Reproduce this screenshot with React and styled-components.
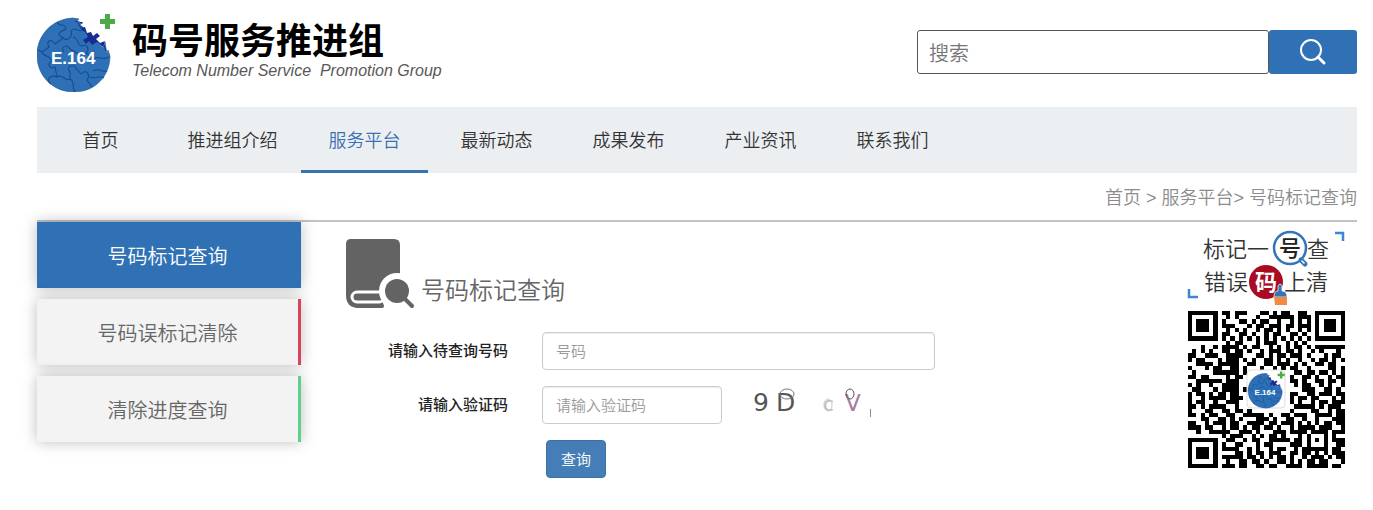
import React, { useState } from 'react'
import styled, { createGlobalStyle } from 'styled-components'

const GlobalStyle = createGlobalStyle`
  * {
    box-sizing: border-box;
  }
  body {
    margin: 0;
    background-color: #fff;
    color: #333;
    font-family: "Noto Sans CJK SC", sans-serif;
    font-weight: 350;
  }
  input, button {
    font-family: inherit;
    font-weight: inherit;
  }
`

const Container = styled.div`
  padding: 0 16px 32px 37px;
`

const Header = styled.header`
  display: flex;
  justify-content: space-between;
  align-items: flex-start;
  height: 107px;
`

const Brand = styled.a`
  display: flex;
  padding-top: 12px;
  color: #000;
  text-decoration: none;
`

const BrandText = styled.div`
  padding: 5px 0 0 15px;
`

const BrandName = styled.h1`
  margin: 0;
  font-size: 36px;
  line-height: 42px;
  font-weight: 700;
`

const BrandSub = styled.p`
  margin: 0;
  font-family: "Liberation Sans", sans-serif;
  font-size: 16px;
  line-height: 24px;
  font-weight: 400;
  font-style: italic;
  white-space: pre;
  color: #595757;
`

const SearchForm = styled.form`
  display: flex;
  width: 440px;
  height: 44px;
  margin-top: 30px;
`

const SearchInput = styled.input`
  flex: 1;
  min-width: 0;
  padding: 0 11px;
  border: 1px solid #555;
  border-radius: 3px;
  font-size: 20px;
  outline: none;

  &::placeholder {
    color: #757575;
  }
`

const SearchButton = styled.button`
  display: flex;
  align-items: center;
  justify-content: center;
  width: 88px;
  padding: 0;
  border: none;
  border-radius: 3px;
  background-color: #3071b6;
  cursor: pointer;
`

const Nav = styled.nav`
  display: flex;
  gap: 5px;
  background-color: #eceff2;
`

const NavLink = styled.a`
  width: 127px;
  height: 66px;
  border-bottom: 3px solid ${props => props.$active ? "#3a72ae" : "transparent"};
  color: ${props => props.$active ? "#3a6fb0" : "#333"};
  font-size: 18px;
  line-height: 64px;
  text-align: center;
  text-decoration: none;
`

const Crumbs = styled.div`
  height: 49px;
  border-bottom: 2px solid #c3c3c3;
  color: #8c8c8c;
  font-family: "Liberation Sans", "Noto Sans CJK SC", sans-serif;
  font-size: 18px;
  line-height: 50px;
  text-align: right;
`

const CrumbLink = styled.a`
  color: inherit;
  text-decoration: none;
`

const Content = styled.div`
  display: flex;
  align-items: flex-start;
`

const Sidebar = styled.aside`
  display: flex;
  flex-direction: column;
  gap: 11px;
  width: 20%;
`

const SideLink = styled.a`
  height: 66px;
  border-right: 3px solid ${props => props.$accent};
  background-color: ${props => props.$active ? "#3071b6" : "#f3f3f3"};
  box-shadow: 0 0 14px rgba(0, 0, 0, 0.26);
  color: ${props => props.$active ? "#fff" : "#666"};
  font-size: 20px;
  line-height: 68px;
  text-align: center;
  text-decoration: none;
`

const Main = styled.main`
  flex: 1;
  padding: 16px 16px 0 44px;
`

const TitleRow = styled.div`
  display: flex;
  align-items: flex-end;
  gap: 6px;
  margin-bottom: 23px;
`

const Title = styled.h2`
  margin: 0;
  color: #666;
  font-size: 24px;
  line-height: 40px;
  font-weight: 350;
`

const QueryForm = styled.form`
  display: grid;
  grid-template-columns: 163px minmax(0, 393px);
  column-gap: 34px;
  row-gap: 16px;
`

const Label = styled.label`
  color: #222;
  font-size: 15px;
  line-height: 36px;
  font-weight: 500;
  text-align: right;
`

const Field = styled.input`
  width: ${props => props.$short ? "180px" : "100%"};
  height: 38px;
  padding: 0 13px 2px;
  border: 1px solid #ccc;
  border-radius: 4px;
  box-shadow: inset 0 1px 1px rgba(0, 0, 0, 0.08);
  font-size: 15px;
  outline: none;

  &::placeholder {
    color: #999;
  }
`

const CodeRow = styled.div`
  display: flex;
  gap: 24px;
`

const SubmitRow = styled.div`
  grid-column: 2;
  padding-left: 4px;
`

const Submit = styled.button`
  width: 60px;
  height: 38px;
  padding: 0 0 2px;
  border: 1px solid #3a70a5;
  border-radius: 4px;
  background-color: #457eb7;
  color: #fff;
  font-size: 15px;
  cursor: pointer;
`

const Promo = styled.div`
  display: flex;
  flex-direction: column;
  padding: 6px 9px 0 0;
`

const navItems = ["首页", "推进组介绍", "服务平台", "最新动态", "成果发布", "产业资讯", "联系我们"]

const sideItems = [
  { text: "号码标记查询", accent: "#3071b6" },
  { text: "号码误标记清除", accent: "#d6455d" },
  { text: "清除进度查询", accent: "#5fd08a" },
]

const qrRows = [
  "#######.##.###...##.#.##..##..#######",
  "#.....#..#.#....#..######.###.#.....#",
  "#.###.#.#...##.#.##..#..#.#.#.#.###.#",
  "#.###.#.###...#.##.###.##.###.#.###.#",
  "#.###.#..#.#.#..#.##.#.#..#.#.#.###.#",
  "#.....#.##..##.#..#.##..##.#..#.....#",
  "#######.#.#.#.#.#.#.#.#.#.#.#.#######",
  ".........#.##...#.###..#.#.#.........",
  "...#..#.####.#.##..#.#.#.##.#.#######",
  ".#.#.#..##.##.#..#.###.##.#..#.#...#.",
  "##..###..####...##.#.##.###.#...#.##.",
  "#.##...#.###.#.#..##.#.#..#..#.##.#.#",
  "..####.#####..##..##.###.#.#..##.##..",
  "#...#.##..##.#...#..#.#.##..#....##.#",
  ".#....######.#...........##.##.##.#.#",
  "##.##....#.##...........#..##.#..#.##",
  "..######.###............##.#..##.##.#",
  "#.#..#..####.............#.##..#.#..#",
  ".##...#.####.#.............###..##.#.",
  "#.##.#.##.##............##..##.###.##",
  "#..#.####.###...........#.##.##...#.#",
  "#.##..#..###............#.#..#.##.###",
  "##.#.####..#.............#####.#.###.",
  "#...##..##.##.#.........#....##..#.##",
  "##.#.##..##..#####.#..##.###..####.##",
  "...##..##.#.#...###.#..##..#..#...###",
  "##..#.###.##..####.##.###.#.#.#.##.##",
  "###.##..#.##.#.##.##.#..#.####.###..#",
  "..#..#####..###.#...###.####.####.###",
  "........#.###..#.#.##.#...#.#...#.#..",
  "#######..##..#.##..#####.##.#.#.#.###",
  "#.....#.#..##...#.##....###.#...#..##",
  "#.###.#.####..#.#..#.##..#.######.##.",
  "#.###.#....##.#.##.###..##.##.#.#.###",
  "#.###.#.#####.##.#.#.##.#..#.###.#.##",
  "#.....#..#..##.##.#..##.#.#.##.##...#",
  "#######.###.##..##.##..####.#####.##.",
]

// one subpath per run of dark modules
const qrPath = qrRows
  .map((row, y) => [...row.matchAll(/#+/g)].map(m => `M${m.index} ${y}h${m[0].length}v1h-${m[0].length}z`).join(""))
  .join("")

function Globe() {
  return (
    <g>
      <path fill="#2d70b7" stroke="#245792" strokeWidth="0.6" d="M36 5 C14 6 0 23 0 42 C0 63 16 79 37 79 C58 79 73 63 73 43 L71 37 L70 41 L68 29 L66 35 L60 29 L56 30 L54 25 L49 20 L46 14 L43 12 L45 10 L39 9 L42 6Z" />
      <g fill="none" stroke="#194b8b" strokeWidth="1.1">
        <path d="M20 9 C22 14 28 10 29 15 C28 19 21 17 22 22 L26 25 L18 31 C13 24 9 29 12 34 L5 39 L1 37" />
        <path d="M26 25 C31 29 36 23 34 18 C38 13 42 20 46 17 M36 24 C42 25 39 32 45 33 C50 30 53 36 49 40 L56 46" />
        <path d="M5 40 C10 45 13 42 15 48 C9 51 13 57 18 54 L20 64 C12 61 9 68 14 71 M20 64 C26 60 27 69 33 66 L33 59 C28 54 36 50 39 55 L44 61" />
        <path d="M33 66 C39 69 34 75 38 79 M44 61 C49 55 54 62 50 67 L55 74 M56 58 C62 54 65 60 70 58 M53 64 C59 67 62 61 67 65 M27 39 C23 34 30 30 33 36 L43 42 M56 46 C61 42 66 48 72 44" />
      </g>
      <path fill="#162c91" d="M43 15 L48 14 L50 20 L54 19 L56 23 L60 20 L63 23 L59 26 L63 30 L68 28 L66 34 L60 29 L55 32 L52 28 L49 31 L46 27 L51 24 L49 20Z" />
      <path fill="none" stroke="#162c91" strokeWidth="1" d="M38 8 L46 10 M41 10 L44 15 M66 30 L69 38" />
      <path fill="#4caa48" d="M68 1h5v5h5v5h-5v5h-5v-5h-5v-5h5z" />
      <text x="14" y="51" fill="#fff" fontFamily="Liberation Sans, sans-serif" fontSize="17" fontWeight="700">E.164</text>
    </g>
  )
}

function BookIcon() {
  return (
    <svg width="70" height="71" viewBox="0 0 70 71">
      <path fill="#636363" d="M6 1H49Q55 1 55 7V64H37Q39 65 39 67Q38 70 36 70H12Q1 69 1 57V6Q1 1 6 1Z" />
      <path fill="#fff" d="M38 64H56V71H39Z" />
      <rect x="7" y="54" width="32" height="10" rx="5" fill="none" stroke="#fff" strokeWidth="3" />
      <circle cx="52" cy="53" r="18" fill="#fff" />
      <circle cx="52" cy="53" r="12" fill="#636363" />
      <path stroke="#636363" strokeWidth="4" strokeLinecap="round" d="M58 59L67 68" />
      <path stroke="#636363" strokeWidth="4" strokeLinecap="round" d="M30 68H37" />
    </svg>
  )
}

function Captcha() {
  return (
    <svg width="130" height="38" viewBox="0 0 130 38" role="img" aria-label="验证码">
      <g fontFamily="DejaVu Sans, sans-serif" fontWeight="400">
        <text x="7" y="25" fontSize="25" fill="#555">9</text>
        <text x="30" y="25" fontSize="25" fill="#555">D</text>
        <text x="77" y="25" fontSize="20" fill="#bbb">c</text>
        <text x="99" y="25" fontSize="23" fill="#a77ca5">V</text>
      </g>
      <ellipse cx="41" cy="8" rx="7" ry="5" fill="none" stroke="#777" />
      <ellipse cx="82" cy="19" rx="4" ry="6" fill="none" stroke="#ccc" />
      <ellipse cx="104" cy="8" rx="4" ry="5" fill="none" stroke="#555" />
      <path stroke="#a77ca5" d="M124.500 23V31" />
    </svg>
  )
}

function Slogan() {
  return (
    <svg width="164" height="78" viewBox="0 0 164 78">
      <g fontSize="22" fill="#333">
        <text x="19" y="29">标记一</text>
        <text x="123" y="29">查</text>
        <text x="20" y="62">错误</text>
        <text x="100" y="62">上清</text>
      </g>
      <circle cx="106" cy="20" r="16" fill="#fff" stroke="#3475b8" strokeWidth="2.500" />
      <path stroke="#3475b8" strokeWidth="5" strokeLinecap="round" d="M117 32L121 36" />
      <path stroke="#fff" strokeWidth="1.500" strokeLinecap="round" d="M118 33L120 35" />
      <text x="95" y="28" fontSize="22" fontWeight="500" fill="#222">号</text>
      <circle cx="82" cy="54" r="17" fill="#a90c22" />
      <text x="71" y="62" fontSize="22" fontWeight="700" fill="#fff">码</text>
      <path fill="#3475b8" stroke="#fff" strokeWidth="0.700" d="M94 58Q96 54 98 58V63Q103 63 103 69H90Q90 63 94 63Z" />
      <path fill="#f18b43" d="M90 69H103V77H91Z" />
      <path fill="none" stroke="#3a86d8" strokeWidth="2.500" d="M151 5H159V13M5 61V69H14" />
    </svg>
  )
}

function QrCode() {
  return (
    <svg width="164" height="165" viewBox="0 0 164 165" role="img" aria-label="E.164">
      <g transform="translate(4 5) scale(4.24)" shapeRendering="crispEdges">
        <path d={qrPath} />
      </g>
      <rect x="63" y="64" width="38" height="38" rx="4" fill="#fff" stroke="#ddd" />
      <g transform="translate(64 65) scale(0.47)">
        <Globe />
      </g>
    </svg>
  )
}

function App() {
  const [keyword, setKeyword] = useState("")
  const [number, setNumber] = useState("")
  const [code, setCode] = useState("")

  const handleSubmit = (e) => e.preventDefault()

  return (
    <>
      <GlobalStyle />
      <Container>
        <Header>
          <Brand href="#">
            <svg width="80" height="80" viewBox="0 -1 80 80"><Globe /></svg>
            <BrandText>
              <BrandName>码号服务推进组</BrandName>
              <BrandSub>Telecom Number Service  Promotion Group</BrandSub>
            </BrandText>
          </Brand>
          <SearchForm onSubmit={handleSubmit}>
            <SearchInput aria-label="搜索" placeholder="搜索" value={keyword} onChange={(e) => setKeyword(e.target.value)} />
            <SearchButton aria-label="搜索">
              <svg width="28" height="28" viewBox="0 0 28 28" fill="none" stroke="#fff" strokeLinecap="round">
                <circle cx="12" cy="12" r="10" strokeWidth="2" />
                <path d="M19 19L25 25" strokeWidth="3" />
              </svg>
            </SearchButton>
          </SearchForm>
        </Header>
        <Nav>
          {navItems.map((item) => (
            <NavLink href="#" key={item} $active={item === "服务平台"}>{item}</NavLink>
          ))}
        </Nav>
        <Crumbs>
          <CrumbLink href="#">首页</CrumbLink> &gt; <CrumbLink href="#">服务平台</CrumbLink>&gt; <CrumbLink href="#">号码标记查询</CrumbLink>
        </Crumbs>
        <Content>
          <Sidebar>
            {sideItems.map((item, i) => (
              <SideLink href="#" key={item.text} $accent={item.accent} $active={i === 0}>{item.text}</SideLink>
            ))}
          </Sidebar>
          <Main>
            <TitleRow>
              <BookIcon />
              <Title>号码标记查询</Title>
            </TitleRow>
            <QueryForm onSubmit={handleSubmit}>
              <Label htmlFor="number">请输入待查询号码</Label>
              <Field id="number" placeholder="号码" value={number} onChange={(e) => setNumber(e.target.value)} />
              <Label htmlFor="code">请输入验证码</Label>
              <CodeRow>
                <Field id="code" $short placeholder="请输入验证码" value={code} onChange={(e) => setCode(e.target.value)} />
                <Captcha />
              </CodeRow>
              <SubmitRow>
                <Submit>查询</Submit>
              </SubmitRow>
            </QueryForm>
          </Main>
          <Promo>
            <Slogan />
            <QrCode />
          </Promo>
        </Content>
      </Container>
    </>
  )
}

export default App
